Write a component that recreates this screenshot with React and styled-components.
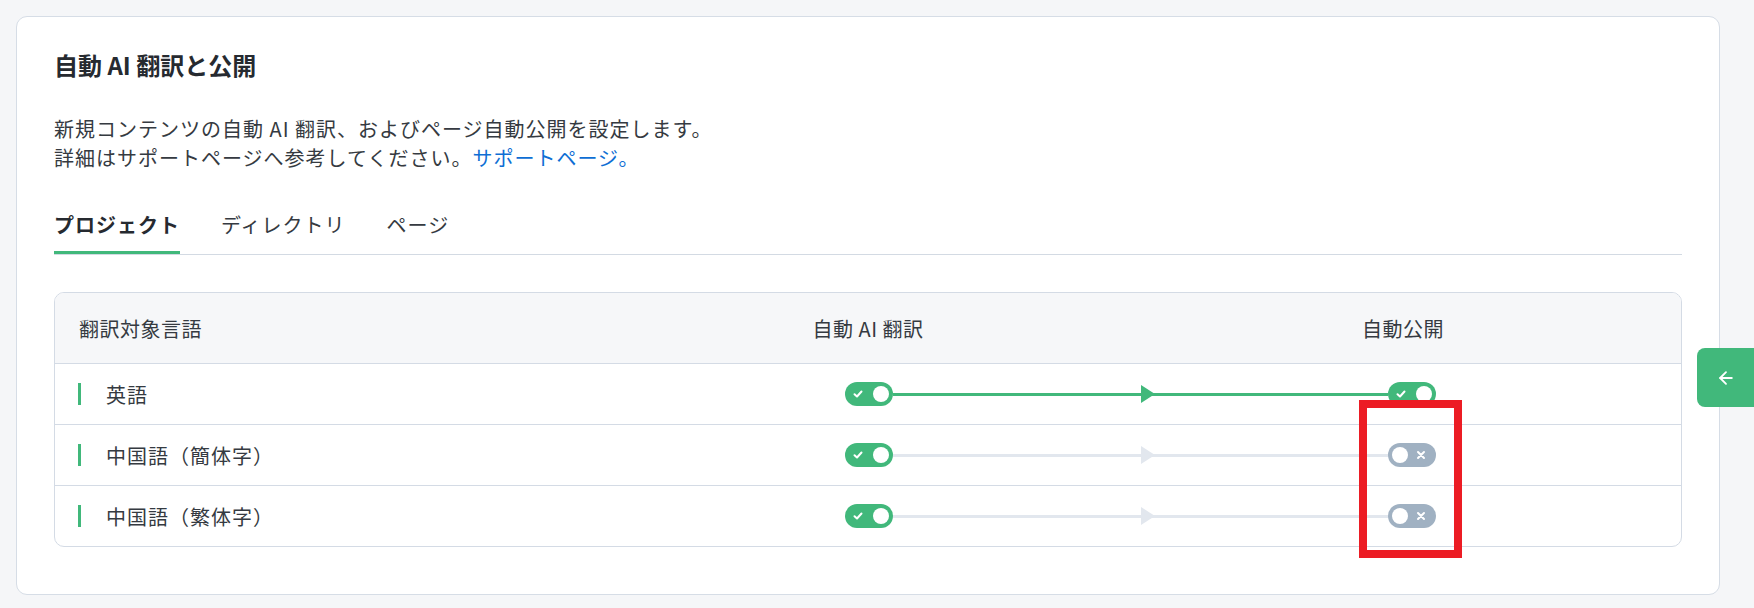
import styled, { createGlobalStyle } from 'styled-components';
import { ArrowLeft } from 'lucide-react';

const GREEN = '#41b87b';

const GlobalStyle = createGlobalStyle`
    body {
        margin: 0;
        background: #f5f6f8;
        font-family: "Noto Sans CJK JP", "Noto Sans", sans-serif;
        color: #2f343b;
    }
`

// lingue di destinazione e stato della pubblicazione automatica
const languages = [
    { name: '英語', translate: true, publish: true },
    { name: '中国語（簡体字）', translate: true, publish: false },
    { name: '中国語（繁体字）', translate: true, publish: false },
]

function Toggle({ on }) {
    return (
        <Switch on={on}>
            {on ? (
                <svg width="10" height="10" viewBox="0 0 10 10">
                    <path d="M1.5 5.2 L4 7.5 L8.5 2.5" fill="none" stroke="#fff" strokeWidth="2" strokeLinecap="round" strokeLinejoin="round" />
                </svg>
            ) : null}
            <Knob />
            {!on ? (
                <svg width="10" height="10" viewBox="0 0 10 10">
                    <path d="M2 2 L8 8 M8 2 L2 8" fill="none" stroke="#fff" strokeWidth="2" strokeLinecap="round" />
                </svg>
            ) : null}
        </Switch>
    )
}

function App() {
    return (
        <>
        <GlobalStyle />
        <Page lang="ja">
            <Card>
                <Title>自動 AI 翻訳と公開</Title>
                <Description>
                    新規コンテンツの自動 AI 翻訳、およびページ自動公開を設定します。<br />
                    詳細はサポートページへ参考してください。<Link href="#">サポートページ。</Link>
                </Description>

                <Tabs>
                    <Tab active>プロジェクト</Tab>
                    <Tab>ディレクトリ</Tab>
                    <Tab>ページ</Tab>
                </Tabs>

                <Table>
                    <HeadRow>
                        <HeadCell>翻訳対象言語</HeadCell>
                        <HeadCell center>自動 AI 翻訳</HeadCell>
                        <HeadCell center shift={14}>自動公開</HeadCell>
                    </HeadRow>
                    {languages.map((lang) => (
                        <Row key={lang.name}>
                            <LangCell>
                                <LangBar />
                                {lang.name}
                            </LangCell>
                            <Flow>
                                <Toggle on={lang.translate} />
                                <Line active={lang.publish} />
                                <Arrow active={lang.publish} />
                                <Line active={lang.publish} />
                                <Toggle on={lang.publish} />
                            </Flow>
                        </Row>
                    ))}
                </Table>
            </Card>

            <SideButton>
                <ArrowLeft size={20} strokeWidth={2.2} />
            </SideButton>

            <Highlight />
        </Page>
        </>
    )
}

const Page = styled.div`
    position: relative;
    padding: 16px 34px 14px 16px;
`

const Card = styled.div`
    background: #fff;
    border: 1px solid #d6dde6;
    border-radius: 11px;
    padding: 31px 37px 47px 37px;
`

const Title = styled.h2`
    margin: 0;
    font-size: 24px;
    line-height: 34px;
    font-weight: 700;
    color: #262a30;
`

const Description = styled.p`
    margin: 32px 0 0 0;
    font-size: 20px;
    line-height: 29px;
    letter-spacing: 1px;
    color: #353a41;
`

const Link = styled.a`
    color: #0e6ed4;
    text-decoration: none;
`

const Tabs = styled.div`
    display: flex;
    gap: 41px;
    margin-top: 39px;
    border-bottom: 1px solid #d3dae3;
`

const Tab = styled.div`
    font-size: 20px;
    line-height: 28px;
    letter-spacing: 1px;
    padding: 0 0 12px 0;
    font-weight: ${props => props.active ? 700 : 400};
    color: ${props => props.active ? '#262a30' : '#353a41'};
    border-bottom: 3px solid ${props => props.active ? GREEN : 'transparent'};
`

const Table = styled.div`
    margin-top: 37px;
    border: 1px solid #d4dbe5;
    border-radius: 10px;
    overflow: hidden;
`

const HeadRow = styled.div`
    display: grid;
    grid-template-columns: 1fr 1fr 1fr;
    height: 70px;
    align-items: center;
    background: #f6f7f9;
    border-bottom: 1px solid #d4dbe5;
`

const HeadCell = styled.div`
    font-size: 20px;
    letter-spacing: 0.5px;
    color: #353a41;
    padding-left: ${props => props.center ? 0 : '24px'};
    padding-right: ${props => props.shift ? props.shift + 'px' : 0};
    text-align: ${props => props.center ? 'center' : 'left'};
`

const Row = styled.div`
    display: grid;
    grid-template-columns: 1fr 1fr 1fr;
    height: 60px;
    align-items: center;
    border-bottom: 1px solid #d4dbe5;
    &:last-child {
        border-bottom: none;
    }
`

const LangCell = styled.div`
    display: flex;
    align-items: center;
    gap: 25px;
    padding-left: 23px;
    font-size: 20px;
    letter-spacing: 1px;
    color: #353a41;
`

const LangBar = styled.span`
    width: 3px;
    height: 22px;
    background: ${GREEN};
`

const Flow = styled.div`
    grid-column: 2 / span 2;
    display: flex;
    align-items: center;
    padding: 0 calc(25% - 26px) 0 calc(25% - 23px);
`

const Line = styled.div`
    flex: 1;
    height: 3px;
    background: ${props => props.active ? GREEN : '#e2e7ee'};
`

const Arrow = styled.div`
    position: relative;
    width: 0;
    height: 0;
    border-top: 9px solid transparent;
    border-bottom: 9px solid transparent;
    border-left: 14px solid ${props => props.active ? GREEN : '#e2e7ee'};
    margin-right: -14px;
`

const Switch = styled.div`
    position: relative;
    z-index: 1;
    flex: none;
    width: 48px;
    height: 24px;
    box-sizing: border-box;
    border-radius: 12px;
    padding: 0 4px 0 ${props => props.on ? '8px' : '4px'};
    display: flex;
    align-items: center;
    justify-content: space-between;
    background: ${props => props.on ? GREEN : '#a0b1c2'};
    svg {
        margin-right: ${props => props.on ? 0 : '6px'};
    }
`

const Knob = styled.span`
    width: 16px;
    height: 16px;
    border-radius: 50%;
    background: #fff;
`

const SideButton = styled.div`
    position: absolute;
    top: 348px;
    right: 0;
    width: 57px;
    height: 59px;
    border-radius: 8px 0 0 8px;
    background: ${GREEN};
    color: #fff;
    display: flex;
    align-items: center;
    justify-content: center;
`

const Highlight = styled.div`
    position: absolute;
    left: 1359px;
    top: 400px;
    width: 103px;
    height: 158px;
    box-sizing: border-box;
    border: 8px solid #ec1c24;
    pointer-events: none;
    z-index: 2;
`

export default App
